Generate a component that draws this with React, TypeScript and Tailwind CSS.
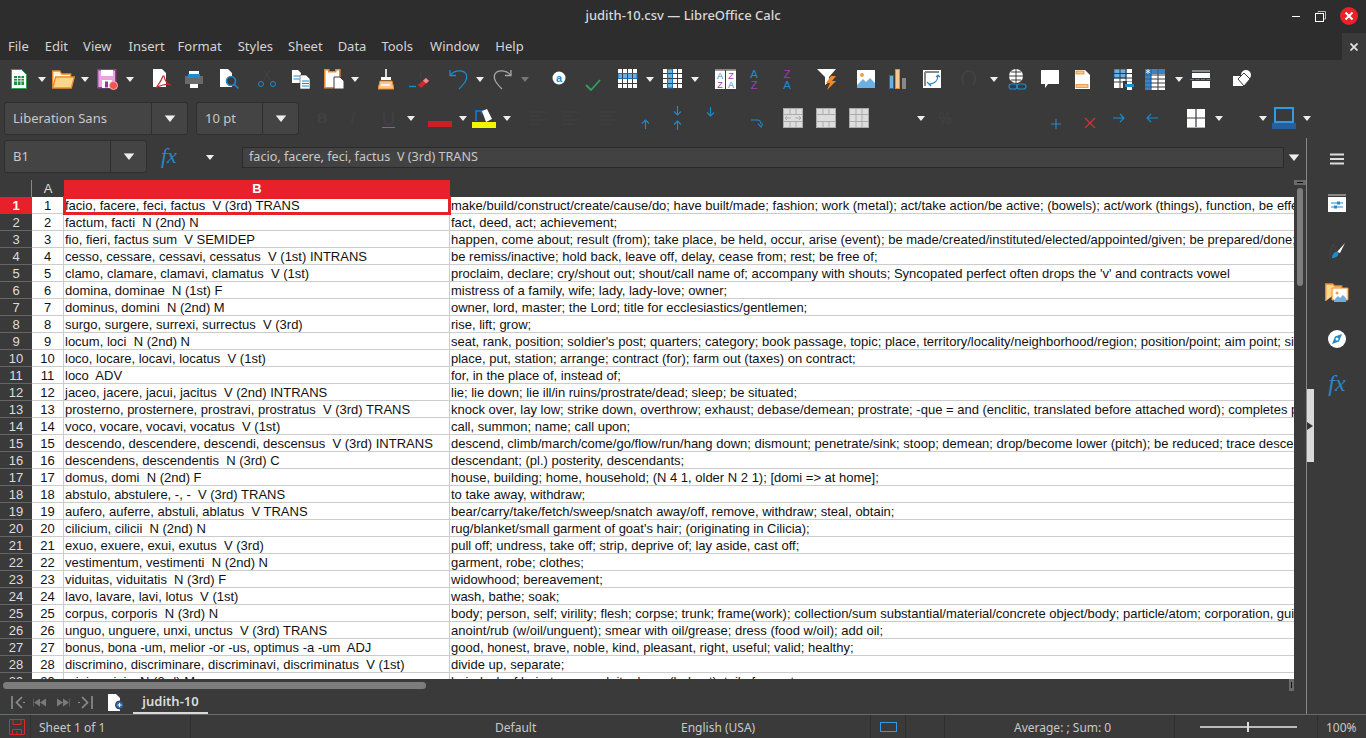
const SANS = "font-['Noto_Sans',sans-serif]";

const rows: [string, string][] = [
  ["facio, facere, feci, factus  V (3rd) TRANS", "make/build/construct/create/cause/do; have built/made; fashion; work (metal); act/take action/be active; (bowels); act/work (things), function, be effective; bring about"],
  ["factum, facti  N (2nd) N", "fact, deed, act; achievement;"],
  ["fio, fieri, factus sum  V SEMIDEP", "happen, come about; result (from); take place, be held, occur, arise (event); be made/created/instituted/elected/appointed/given; be prepared/done; be"],
  ["cesso, cessare, cessavi, cessatus  V (1st) INTRANS", "be remiss/inactive; hold back, leave off, delay, cease from; rest; be free of;"],
  ["clamo, clamare, clamavi, clamatus  V (1st)", "proclaim, declare; cry/shout out; shout/call name of; accompany with shouts; Syncopated perfect often drops the 'v' and contracts vowel"],
  ["domina, dominae  N (1st) F", "mistress of a family, wife; lady, lady-love; owner;"],
  ["dominus, domini  N (2nd) M", "owner, lord, master; the Lord; title for ecclesiastics/gentlemen;"],
  ["surgo, surgere, surrexi, surrectus  V (3rd)", "rise, lift; grow;"],
  ["locum, loci  N (2nd) N", "seat, rank, position; soldier's post; quarters; category; book passage, topic; place, territory/locality/neighborhood/region; position/point; aim point; situation"],
  ["loco, locare, locavi, locatus  V (1st)", "place, put, station; arrange; contract (for); farm out (taxes) on contract;"],
  ["loco  ADV", "for, in the place of, instead of;"],
  ["jaceo, jacere, jacui, jacitus  V (2nd) INTRANS", "lie; lie down; lie ill/in ruins/prostrate/dead; sleep; be situated;"],
  ["prosterno, prosternere, prostravi, prostratus  V (3rd) TRANS", "knock over, lay low; strike down, overthrow; exhaust; debase/demean; prostrate; -que = and (enclitic, translated before attached word); completes phrase"],
  ["voco, vocare, vocavi, vocatus  V (1st)", "call, summon; name; call upon;"],
  ["descendo, descendere, descendi, descensus  V (3rd) INTRANS", "descend, climb/march/come/go/flow/run/hang down; dismount; penetrate/sink; stoop; demean; drop/become lower (pitch); be reduced; trace descent from"],
  ["descendens, descendentis  N (3rd) C", "descendant; (pl.) posterity, descendants;"],
  ["domus, domi  N (2nd) F", "house, building; home, household; (N 4 1, older N 2 1); [domi => at home];"],
  ["abstulo, abstulere, -, -  V (3rd) TRANS", "to take away, withdraw;"],
  ["aufero, auferre, abstuli, ablatus  V TRANS", "bear/carry/take/fetch/sweep/snatch away/off, remove, withdraw; steal, obtain;"],
  ["cilicium, cilicii  N (2nd) N", "rug/blanket/small garment of goat's hair; (originating in Cilicia);"],
  ["exuo, exuere, exui, exutus  V (3rd)", "pull off; undress, take off; strip, deprive of; lay aside, cast off;"],
  ["vestimentum, vestimenti  N (2nd) N", "garment, robe; clothes;"],
  ["viduitas, viduitatis  N (3rd) F", "widowhood; bereavement;"],
  ["lavo, lavare, lavi, lotus  V (1st)", "wash, bathe; soak;"],
  ["corpus, corporis  N (3rd) N", "body; person, self; virility; flesh; corpse; trunk; frame(work); collection/sum substantial/material/concrete object/body; particle/atom; corporation, guild; group"],
  ["unguo, unguere, unxi, unctus  V (3rd) TRANS", "anoint/rub (w/oil/unguent); smear with oil/grease; dress (food w/oil); add oil;"],
  ["bonus, bona -um, melior -or -us, optimus -a -um  ADJ", "good, honest, brave, noble, kind, pleasant, right, useful; valid; healthy;"],
  ["discrimino, discriminare, discriminavi, discriminatus  V (1st)", "divide up, separate;"],
  ["crinis, crinis  N (3rd) M", "hair; lock of hair; tresses; plait; plume (helmet); tail of comet;"],
];

const BLUE = "#1e8bcd";
const DIM = "#444444";

function Drop({ className = "", dim = false }: { className?: string; dim?: boolean }) {
  return (
    <svg width="8" height="5" viewBox="0 0 8 5" className={`shrink-0 ${className}`}>
      <path d="M0 0h8L4 5z" fill={dim ? "#777" : "#eee"} />
    </svg>
  );
}

function Ico({ w, h, className = "", children }: { w: number; h: number; className?: string; children: React.ReactNode }) {
  return (
    <svg width={w} height={h} viewBox={`0 0 ${w} ${h}`} className={`shrink-0 ${className}`}>
      {children}
    </svg>
  );
}

function GridIcon({ cols, className }: { cols: boolean; className: string }) {
  const cells = [];
  for (let r = 0; r < 4; r++)
    for (let c = 0; c < 4; c++) {
      const on = cols ? c === 1 : r === 1;
      cells.push(<rect key={`${r}-${c}`} x={c * 5} y={r * 5} width="4" height="4" fill={on ? "#6bb0e0" : "#fff"} />);
    }
  return (
    <Ico w={20} h={20} className={className}>
      {cells}
      {cols ? <rect x="4.500" y="0" width="5" height="19" fill="none" stroke="#1a6cb5" /> : <rect x="0" y="4.500" width="19" height="5" fill="none" stroke="#1a6cb5" />}
    </Ico>
  );
}

function AZ({ top, bottom, topCol, botCol, className }: { top: string; bottom: string; topCol: string; botCol: string; className: string }) {
  return (
    <Ico w={10} h={22} className={className}>
      <text x="5" y="10" textAnchor="middle" fontSize="11.500" fontFamily="Liberation Sans" fill={topCol}>{top}</text>
      <text x="5" y="20.500" textAnchor="middle" fontSize="11.500" fontFamily="Liberation Sans" fill={botCol}>{bottom}</text>
    </Ico>
  );
}

function Toolbar1() {
  return (
    <div className="flex h-[38px] items-center bg-[#3a3a3a]">
      <Ico w={16} h={20} className="ml-[11px]">
        <path d="M.5.5h10l5 5v14H.5z" fill="#fff" stroke="#2f9e4f" />
        <path d="M3 7h10v9H3z" fill="#1e9146" />
        <path d="M3 9.500h10M3 12h10M6.500 7v9M10 7v9" stroke="#fff" strokeWidth=".8" />
      </Ico>
      <Drop className="ml-[11px]" />
      <Ico w={23} h={19} className="ml-[6px]">
        <path d="M.7 18V1h7l2 3h9v3" fill="#fff3d8" stroke="#ee8a2c" strokeWidth="1.300" />
        <path d="M.7 18l3-11h18.600l-3 11z" fill="#fad58c" stroke="#ee8a2c" strokeWidth="1.300" />
      </Ico>
      <Drop className="ml-[6px]" />
      <Ico w={21} h={21} className="ml-[8px]">
        <path d="M.7.7h18v18H.7z" fill="#e8a3e0" stroke="#8e3a9e" strokeWidth="1.400" />
        <rect x="4" y="1" width="12" height="6" fill="#fff" />
        <rect x="5" y="11" width="10" height="8" fill="#fff" />
        <rect x="8" y="12.500" width="3" height="6" fill="#8e3a9e" />
        <circle cx="16.500" cy="16.500" r="4" fill="#f85050" stroke="#f4b0b0" />
      </Ico>
      <Drop className="ml-[8px]" />
      <Ico w={19} h={20} className="ml-[19px]">
        <path d="M0 0h9l4 4v14H0z" fill="#fff" />
        <path d="M10 7c-2 6-5 9-7 12 3-2 10-5 15-3-3-.5-6-4-7-9z" fill="none" stroke="#c02a2a" strokeWidth="1.200" />
      </Ico>
      <Ico w={18} h={17} className="ml-[13px]">
        <rect x="4" y="0" width="10" height="6" fill="#fff" />
        <rect x="0" y="5" width="18" height="8" fill="#6a6a6a" />
        <rect x="3" y="3" width="12" height="4" fill="#1e8bcd" />
        <rect x="5" y="13" width="8" height="4" fill="#fff" />
      </Ico>
      <Ico w={19} h={20} className="ml-[17px]">
        <path d="M0 0h8l4 4v14H0z" fill="#fff" />
        <circle cx="11" cy="12" r="4.500" fill="#3a3a3a" stroke="#1e8bcd" strokeWidth="1.600" />
        <path d="M14 15l4.500 4.500" stroke="#1e8bcd" strokeWidth="1.400" />
      </Ico>
      <Ico w={18} h={20} className="ml-[19px]">
        <path d="M5 12L12 1M13 12L6 1" stroke={DIM} fill="none" />
        <circle cx="3" cy="15" r="2.500" fill="none" stroke={BLUE} />
        <circle cx="15" cy="15" r="2.500" fill="none" stroke={BLUE} />
      </Ico>
      <Ico w={19} h={19} className="ml-[16px]">
        <path d="M0 0h6l3 3v10H0z" fill="#fff" />
        <path d="M1.500 6h6M1.500 9h6" stroke={BLUE} />
        <path d="M8 5h6l4 4v10H8z" fill="#fff" stroke="#3a3a3a" strokeWidth=".6" />
        <path d="M10 11h7M10 13.500h7M10 16h7" stroke={BLUE} />
      </Ico>
      <Ico w={21} h={20} className="ml-[13px]">
        <path d="M.8.8h4v2h7v-2h4v18H.8z" fill="#fff" stroke="#ee8a2c" strokeWidth="1.500" />
        <path d="M10 8h6l4 4v8H10z" fill="#fff" stroke="#3a3a3a" />
      </Ico>
      <Drop className="ml-[6px]" />
      <Ico w={16} h={21} className="ml-[19px]">
        <rect x="7" y="0" width="2" height="9" fill="#d8d8d8" />
        <rect x="3" y="8" width="10" height="3" fill="#fff" />
        <path d="M2 12h12l2 8H0z" fill="#f6c78e" stroke="#e98a2c" />
        <path d="M3 16h9" stroke="#fff" strokeWidth="1.500" />
      </Ico>
      <Ico w={20} h={20} className="ml-[15px]">
        <path d="M0 17.500h7" stroke={BLUE} strokeWidth="1.400" />
        <path d="M9 16l8-7 3 3-8 7z" fill="#d9262c" />
        <path d="M14 11.500l3-2.500 3 3-3 2.500z" fill="#ef8a8a" />
        <path d="M12 3l-1 6" stroke={DIM} />
      </Ico>
      <Ico w={19} h={21} className="ml-[20px]">
        <path d="M1.500 6C5 1.500 14 0 17 5c2.500 5-2 10-7 15" fill="none" stroke={BLUE} strokeWidth="1.300" />
        <path d="M1 1v5.500h6" fill="none" stroke={BLUE} strokeWidth="1.300" />
      </Ico>
      <Drop className="ml-[8px]" />
      <Ico w={19} h={21} className="ml-[9px]">
        <path d="M18 1v5.500h-6" fill="none" stroke="#a8a8a8" strokeWidth="1.300" />
        <path d="M17.500 6C14 1.500 5 0 2 5c-2.500 5 2 10 7 15" fill="none" stroke="#a8a8a8" strokeWidth="1.300" />
      </Ico>
      <Drop dim className="ml-[9px]" />
      <Ico w={14} h={14} className="ml-[23px] mb-[2px]">
        <circle cx="7" cy="7" r="6.500" fill="#fff" />
        <text x="7" y="10.800" textAnchor="middle" fontSize="11" fontWeight="700" fontFamily="Liberation Sans" fill={BLUE}>a</text>
      </Ico>
      <Ico w={16} h={12} className="ml-[19px] mt-[11px]">
        <path d="M1 6l5 5 9-10" fill="none" stroke="#2ca35a" strokeWidth="1.800" />
      </Ico>
      <GridIcon cols={false} className="ml-[17px]" />
      <Drop className="ml-[8px]" />
      <GridIcon cols className="ml-[9px]" />
      <Drop className="ml-[8px]" />
      <Ico w={21} h={20} className="ml-[16px]">
        <rect y="0" width="21" height="1" fill="#888" />
        <rect y="1.500" width="10" height="18.500" fill="#fff" />
        <rect x="11" y="1.500" width="10" height="18.500" fill="#fff" />
        <text x="5" y="10" textAnchor="middle" fontSize="9" fontFamily="Liberation Sans" fill={BLUE}>A</text>
        <text x="5" y="19" textAnchor="middle" fontSize="9" fontFamily="Liberation Sans" fill="#a33ab0">Z</text>
        <text x="16" y="10" textAnchor="middle" fontSize="9" fontFamily="Liberation Sans" fill="#a33ab0">Z</text>
        <text x="16" y="19" textAnchor="middle" fontSize="9" fontFamily="Liberation Sans" fill={BLUE}>A</text>
      </Ico>
      <AZ top="A" bottom="Z" topCol={BLUE} botCol="#a33ab0" className="ml-[13px]" />
      <AZ top="Z" bottom="A" topCol="#a33ab0" botCol={BLUE} className="ml-[23px]" />
      <Ico w={20} h={21} className="ml-[25px]">
        <path d="M0 0h19l-7 8v5l-4 3V8z" fill="#fff" />
        <path d="M14 7h5l-4 5h4l-9 9 3-7H9z" fill="#f08a2c" />
      </Ico>
      <Ico w={18} h={18} className="ml-[20px]">
        <rect width="18" height="18" fill="#fff" />
        <circle cx="5" cy="5" r="2" fill="#f0a040" />
        <path d="M0 15l6-6 3 3 4-4 5 5v5H0z" fill="#6bb0e0" />
      </Ico>
      <Ico w={17} h={20} className="ml-[14px]">
        <rect x=".5" y="6.500" width="4" height="13" fill="#6bb0e0" stroke="#1a6cb5" />
        <rect x="6.500" y=".5" width="4" height="19" fill="#f6c78e" stroke="#ee8a2c" />
        <rect x="13" y="9" width="4" height="11" fill="#888" />
      </Ico>
      <Ico w={18} h={18} className="ml-[17px]">
        <rect width="18" height="18" fill="#fff" />
        <path d="M2 2h14M2 2v14" stroke="#888" strokeWidth="2" />
        <path d="M6 14C12 14 15 10 15 5M4 12l2 2 2 2M13 7l2-2 2 2" fill="none" stroke={BLUE} strokeWidth="1.200" />
      </Ico>
      <Ico w={15} h={18} className="ml-[20px]">
        <path d="M3 15C-1 8 3 1 8 1s9 7 4 14" fill="none" stroke={DIM} strokeWidth="1.500" />
      </Ico>
      <Drop className="ml-[14px]" />
      <Ico w={20} h={21} className="ml-[10px]">
        <circle cx="8" cy="7" r="7" fill="#fff" />
        <path d="M1 7h14M8 0v14M3 3h10M3 11h10" stroke="#3a3a3a" />
        <rect x="1" y="15" width="8" height="5" rx="2.500" fill="none" stroke={BLUE} strokeWidth="1.200" />
        <rect x="9" y="15" width="9" height="5" rx="2.500" fill="none" stroke={BLUE} strokeWidth="1.200" />
      </Ico>
      <Ico w={18} h={18} className="ml-[13px]">
        <path d="M0 0h18v14H7l-3 4v-4H0z" fill="#fff" />
      </Ico>
      <Ico w={15} h={19} className="ml-[16px]">
        <path d="M0 0h10l5 5v14H0z" fill="#fff" />
        <rect x="1" y="1" width="8" height="3" fill="#f6c78e" stroke="#ee8a2c" strokeWidth=".8" />
        <rect x="1" y="14.500" width="12" height="3" fill="#f6c78e" stroke="#ee8a2c" strokeWidth=".8" />
      </Ico>
      <Ico w={20} h={21} className="ml-[24px]">
        <rect width="18" height="19" fill="#fff" />
        <rect width="12" height="9" fill="#6bb0e0" stroke="#1a6cb5" />
        <path d="M0 4.500h18M0 9h18M0 13h18M6 0v19M12 0v19" stroke="#3a3a3a" />
        <rect x="9" y="12" width="11" height="9" fill="#3a3a3a" />
        <rect x="13" y="12.500" width="5" height="3" fill="#fff" />
        <rect x="11" y="15" width="9" height="3" fill={BLUE} />
        <rect x="13" y="18" width="5" height="3" fill="#fff" />
      </Ico>
      <Ico w={20} h={21} className="ml-[11px]">
        <rect width="20" height="21" fill="#fff" />
        <path d="M0 6h20M0 10h20M0 14h20M0 18h20M6 0v21M13 0v21" stroke="#3a3a3a" />
        <rect width="6" height="21" fill="#1a6cb5" opacity=".85" />
        <rect width="20" height="5" fill="#1a6cb5" opacity=".85" />
        <path d="M3 0v5M.7 1.200l4.600 2.600M5.300 1.200L.7 3.800" stroke="#fff" strokeWidth=".8" />
      </Ico>
      <Drop className="ml-[10px]" />
      <Ico w={22} h={18} className="ml-[7px]">
        <rect x="2" y="0" width="18" height="2" fill="#888" />
        <rect x="2" y="3" width="18" height="5" fill="#fff" />
        <path d="M0 9.500h22" stroke={BLUE} strokeDasharray="4 1.500" />
        <rect x="2" y="11" width="18" height="7" fill="#fff" />
      </Ico>
      <Ico w={19} h={18} className="ml-[21px]">
        <rect x="0" y="6" width="11" height="10" fill="#fff" />
        <circle cx="13" cy="5" r="5" fill="#fff" />
        <path d="M11 3l6 6-6 7-6-7z" fill="#fff" stroke="#3a3a3a" />
      </Ico>
    </div>
  );
}

function Combo({ text, w, btn }: { text: string; w: string; btn: string }) {
  return (
    <div className={`flex h-[33px] items-center rounded-[3px] border border-[#2e2e2e] bg-[#444444] ${w}`}>
      <span className="flex-1 truncate pl-[8px] pt-[1px] text-[13px] text-[#c8c8c8]">{text}</span>
      <div className={`flex h-full items-center justify-center border-l border-[#2e2e2e] ${btn}`}>
        <Drop className="scale-[1.35]" />
      </div>
    </div>
  );
}

function ArrowV({ up, className }: { up: boolean; className: string }) {
  return (
    <Ico w={9} h={10} className={className}>
      <path d={up ? "M4.500 10V1M1 4.500L4.500 1 8 4.500" : "M4.500 0v9M1 5.500L4.500 9 8 5.500"} fill="none" stroke={BLUE} strokeWidth="1.100" />
    </Ico>
  );
}

function DimLines({ className }: { className: string }) {
  return (
    <Ico w={16} h={14} className={className}>
      <path d="M0 1h16M0 5h11M0 9h16M0 13h11" stroke="#414141" />
    </Ico>
  );
}

function MergeIcon({ className, kind }: { className: string; kind: number }) {
  return (
    <Ico w={20} h={20} className={className}>
      <rect x=".5" y=".5" width="19" height="19" fill="#dddddd" stroke="#ababab" />
      <path d="M0 6.500h20M0 13.500h20" stroke="#ababab" />
      {kind !== 2 && <path d="M7 0v6M13 0v6M7 14v6M13 14v6" stroke="#ababab" />}
      {kind === 0 && <path d="M2 10h6M12 10h6M2 10l2-2M2 10l2 2M18 10l-2-2M18 10l-2 2" stroke="#ababab" fill="none" />}
      {kind === 2 && <path d="M7 0v20M13 0v20" stroke="#ababab" />}
    </Ico>
  );
}

function Toolbar2() {
  return (
    <div className="flex h-[40px] items-center bg-[#3a3a3a]">
      <div className="ml-[4px]">
        <Combo text="Liberation Sans" w="w-[184px]" btn="w-[36px]" />
      </div>
      <div className="ml-[8px]">
        <Combo text="10 pt" w="w-[103px]" btn="w-[36px]" />
      </div>
      <span className="ml-[18px] w-[12px] font-['Liberation_Sans',sans-serif] text-[15px] font-bold text-[#414141]">B</span>
      <span className="ml-[21px] w-[6px] font-['Liberation_Serif',serif] text-[15px] italic text-[#414141]">I</span>
      <Ico w={13} h={16} className="ml-[26px] mt-[3px]">
        <path d="M2 0v8a4 4 0 009 0V0" fill="none" stroke={DIM} strokeWidth="1.300" />
        <path d="M0 15.500h13" stroke={BLUE} />
      </Ico>
      <Drop className="ml-[12px]" />
      <div className="ml-[13px] mt-[12px] h-[6px] w-[24px] bg-[#c91f25]" />
      <Drop className="ml-[7px]" />
      <div className="ml-[5px] flex w-[24px] flex-col">
        <Ico w={24} h={13}>
          <path d="M4 12V2h6v3" fill="none" stroke="#1a6cb5" strokeWidth="2" />
          <path d="M10 2l5-2 5 10-6 3z" fill="#fff" />
        </Ico>
        <div className="h-[6px] bg-[#f5f500]" />
      </div>
      <Drop className="ml-[7px]" />
      <DimLines className="ml-[19px]" />
      <DimLines className="ml-[17px]" />
      <DimLines className="ml-[21px]" />
      <ArrowV up className="ml-[25px] mt-[11px]" />
      <div className="ml-[23px] flex flex-col gap-[4px]">
        <ArrowV up={false} className="" />
        <ArrowV up className="" />
      </div>
      <ArrowV up={false} className="ml-[24px] mb-[12px]" />
      <Ico w={12} h={10} className="ml-[36px] mt-[9px]">
        <path d="M0 2h6c2.500 0 4 1.500 4 4M7 5.500L10 9 12 5.500" fill="none" stroke={BLUE} strokeWidth="1.100" />
      </Ico>
      <MergeIcon kind={0} className="ml-[20px]" />
      <MergeIcon kind={1} className="ml-[13px]" />
      <MergeIcon kind={2} className="ml-[13px]" />
      <Drop className="ml-[48px]" />
      <span className="ml-[13px] w-[14px] text-[17px] text-[#414141]">%</span>
      <Ico w={12} h={12} className="ml-[98px] mt-[12px]">
        <path d="M6 1v10M1 6h10" stroke={BLUE} strokeWidth="1.100" />
      </Ico>
      <Ico w={12} h={12} className="ml-[22px] mt-[10px]">
        <path d="M1 1l10 10M11 1L1 11" stroke="#d8333a" strokeWidth="1.100" />
      </Ico>
      <Ico w={12} h={10} className="ml-[17px]">
        <path d="M0 5h11M7 1l4 4-4 4" fill="none" stroke={BLUE} strokeWidth="1.100" />
      </Ico>
      <Ico w={12} h={10} className="ml-[21px]">
        <path d="M12 5H1M5 1L1 5l4 4" fill="none" stroke={BLUE} strokeWidth="1.100" />
      </Ico>
      <Ico w={18} h={19} className="ml-[29px]">
        <rect width="18" height="18" fill="#fff" />
        <path d="M9 0v18M0 9h18" stroke="#3a3a3a" strokeWidth="1.200" />
        <path d="M0 18.500h18" stroke="#f6a24a" />
      </Ico>
      <Drop className="ml-[10px]" />
      <Drop className="ml-[36px]" />
      <div className="ml-[5px] flex w-[24px] flex-col">
        <div className="mx-auto h-[16px] w-[20px] border-2 border-[#2f9be6] bg-[#3a3a3a]" />
        <div className="h-[6px] bg-[#265f9e]" />
      </div>
      <Drop className="ml-[7px]" />
    </div>
  );
}

function FormulaBar() {
  return (
    <div className="flex h-[42px] items-start bg-[#3a3a3a]">
      <div className="ml-[4px] mt-[2px] flex h-[33px] w-[143px] items-center rounded-[3px] border border-[#2e2e2e] bg-[#444444]">
        <span className="flex-1 pl-[8px] text-[13px] text-[#c8c8c8]">B1</span>
        <div className="flex h-full w-[36px] items-center justify-center border-l border-[#2e2e2e]">
          <Drop className="scale-[1.35]" />
        </div>
      </div>
      <span className="ml-[14px] mt-[6px] w-[16px] font-['Liberation_Serif',serif] text-[22px] italic leading-[24px] text-[#2a86c7]">fx</span>
      <Drop className="ml-[29px] mt-[17px]" />
      <div className="ml-[28px] mt-[9px] flex h-[21px] w-[1042px] items-center whitespace-pre border border-[#2a2a2a] bg-[#424242] pl-[6px] text-[12.6px] text-[#c8c8c8]">
        facio, facere, feci, factus  V (3rd) TRANS
      </div>
      <Drop className="ml-[6px] mt-[17px] scale-[1.35]" />
    </div>
  );
}

function Grid() {
  return (
    <div className="relative flex h-[499px] overflow-hidden">
      <div className="flex min-w-0 flex-1 flex-col overflow-hidden font-['Liberation_Sans',sans-serif] text-[13px] text-[#111]">
        <div className="flex h-[17px] shrink-0 leading-[17px]">
          <div className="w-[32px] border-r border-[#888] bg-[#3a3a3a]" />
          <div className="w-[32px] bg-[#3a3a3a] text-center text-[#ddd]">A</div>
          <div className="w-[386px] bg-[#e8202a] text-center font-bold text-white">B</div>
          <div className="flex-1 bg-[#3a3a3a]" />
        </div>
        {rows.map(([b, c], i) => (
          <div key={i} className="flex h-[17px] shrink-0 leading-[16px]">
            <div className={`w-[32px] shrink-0 border-b pt-[1px] text-center ${i === 0 ? "border-[#e8202a] bg-[#e8202a] font-bold text-white" : "border-[#666] bg-[#3a3a3a] text-[#ddd]"}`}>
              {i + 1}
            </div>
            <div className="w-[32px] shrink-0 border-r border-b border-[#ccc] bg-white pt-[1px] text-center">{i + 1}</div>
            <div className={`relative w-[386px] shrink-0 overflow-hidden whitespace-pre border-r border-b border-[#ccc] bg-white pl-[1px] pt-[1px] ${i === 0 ? "z-10 overflow-visible outline-[3px] -outline-offset-2 outline-[#e8202a]" : ""}`}>
              {b}
            </div>
            <div className="min-w-0 flex-1 overflow-hidden whitespace-pre border-b border-[#ccc] bg-white pl-[1px] pt-[1px]">{c}</div>
          </div>
        ))}
      </div>
      <div className="relative w-[12px] shrink-0 bg-[#3a3a3a]">
        <div className="flex h-[5px] items-center justify-center bg-[#6a6a6a]">
          <div className="h-[1px] w-[6px] bg-[#111]" />
        </div>
        <div className="mx-auto mt-[3px] h-[98px] w-[6px] rounded-full bg-[#7d7d7d]" />
      </div>
    </div>
  );
}

function HScroll() {
  return (
    <div className="flex h-[12px] items-center bg-[#3a3a3a]">
      <div className="ml-[3px] h-[7px] w-[423px] rounded-full bg-[#7d7d7d]" />
      <div className="ml-auto mr-[12px] flex h-full w-[5px] items-center justify-center bg-[#6a6a6a]">
        <div className="h-[6px] w-[1px] bg-[#111]" />
      </div>
    </div>
  );
}

function TabBar() {
  return (
    <div className="flex h-[23px] items-center bg-[#3a3a3a]">
      <Ico w={14} h={13} className="ml-[11px]">
        <path d="M1 0v13M11 1L5.500 6.500 11 12" fill="none" stroke="#8f8f8f" strokeWidth="1.600" />
        <path d="M12 6.500h2" stroke="#8f8f8f" />
      </Ico>
      <Ico w={14} h={9} className="ml-[8px]">
        <path d="M0 .5v8" stroke="#7a7a7a" />
        <path d="M1 4.500l6-4v8zM7 4.500l6-4v8z" fill="#7a7a7a" />
      </Ico>
      <Ico w={14} h={9} className="ml-[9px]">
        <path d="M14 .5v8" stroke="#7a7a7a" />
        <path d="M13 4.500l-6-4v8zM7 4.500l-6-4v8z" fill="#7a7a7a" />
      </Ico>
      <Ico w={15} h={13} className="ml-[8px]">
        <path d="M14 0v13M4 1l5.500 5.500L4 12" fill="none" stroke="#8f8f8f" strokeWidth="1.600" />
        <path d="M0 6.500h2" stroke="#8f8f8f" />
      </Ico>
      <Ico w={16} h={17} className="ml-[15px]">
        <path d="M0 0h8l4 4v13H0z" fill="#fff" />
        <circle cx="11.500" cy="11" r="4" fill="#2d6db5" stroke="#3a3a3a" />
        <path d="M11.500 9v4M9.500 11h4" stroke="#fff" />
      </Ico>
      <div className="ml-[9px] flex h-full w-[75px] items-center justify-center border-b-2 border-[#d8d8d8] text-[13px] font-semibold text-[#dcdcdc]">
        judith-10
      </div>
    </div>
  );
}

function Sidebar() {
  return (
    <div className="relative flex w-[60px] shrink-0 flex-col items-center border-l border-[#888] bg-[#3a3a3a] pl-[1px]">
      <div className="absolute left-0 top-[251px] flex h-[73px] w-[7px] items-center bg-[#d9d9d9]">
        <svg width="6" height="8" viewBox="0 0 6 8">
          <path d="M0 0l6 4-6 4z" fill="#333" />
        </svg>
      </div>
      <Ico w={14} h={12} className="mt-[15px]">
        <path d="M0 1.500h14M0 6h14M0 10.500h14" stroke="#ddd" strokeWidth="2" />
      </Ico>
      <Ico w={18} h={18} className="mt-[29px]">
        <rect width="18" height="2" fill="#888" />
        <rect y="3" width="18" height="15" fill="#fff" />
        <path d="M3 9h12M3 13h12" stroke={BLUE} />
        <rect x="9" y="7.500" width="3" height="3" fill={BLUE} />
        <rect x="6" y="11.500" width="3" height="3" fill={BLUE} />
      </Ico>
      <Ico w={18} h={18} className="mt-[30px]">
        <path d="M9 10l8-9-5 10z" fill="#fff" />
        <path d="M4 16c0-4 3-7 6-6 1 2 0 5-2 5-1 1-3 1-4 1z" fill={BLUE} />
        <path d="M1 14L5 2l4 8" fill="none" stroke={DIM} />
      </Ico>
      <Ico w={24} h={19} className="mt-[23px]">
        <path d="M.7 18V1h7l2 2h7v3" fill="#fad58c" stroke="#ee8a2c" strokeWidth="1.300" />
        <path d="M7 5h16v12H7z" fill="#fff3d8" stroke="#ee8a2c" />
        <rect x="9" y="6.500" width="12" height="12" fill="#fff" />
        <circle cx="12" cy="10" r="1.500" fill="#f0a040" />
        <path d="M9 17l4-4 2 2 3-3 3 3v4H9z" fill="#6bb0e0" />
      </Ico>
      <Ico w={18} h={18} className="mt-[28px]">
        <circle cx="9" cy="9" r="9" fill="#fff" />
        <path d="M14 4L7 6.500 4 14l7-2.500z" fill={BLUE} />
        <circle cx="9" cy="9" r="1.500" fill="#fff" />
      </Ico>
      <span className="mt-[22px] font-['Liberation_Serif',serif] text-[24px] italic leading-[26px] text-[#2a86c7]">fx</span>
    </div>
  );
}

function StatusBar() {
  return (
    <div className="flex h-[24px] items-center border-t border-[#6a6a6a] bg-[#3a3a3a] text-[12px] text-[#c8c8c8]">
      <div className="flex h-full w-[31px] items-center border-r border-[#2f2f2f] pl-[9px]">
        <Ico w={16} h={16}>
          <path d="M.5.5h15v15H.5zM4 .5v5h8v-5M3.500 15.500v-5h9v5M8 12v3" fill="none" stroke="#d52b2b" />
        </Ico>
      </div>
      <div className="h-full w-[160px] border-r border-[#2f2f2f] pl-[8px] pt-[4px]">Sheet 1 of 1</div>
      <div className="h-full w-[410px] pl-[304px] pt-[4px]">Default</div>
      <div className="h-full w-[270px] border-r border-[#2f2f2f] pl-[80px] pt-[4px]">English (USA)</div>
      <div className="flex h-full w-[35px] items-center border-r border-[#2f2f2f] pl-[9px]">
        <div className="h-[10px] w-[17px] border border-[#2f9be6]" />
      </div>
      <div className="h-full w-[39px] border-r border-[#2f2f2f]" />
      <div className="h-full w-[230px] border-r border-[#2f2f2f] pl-[69px] pt-[4px]">Average: ; Sum: 0</div>
      <div className="flex h-full w-[143px] items-center border-r border-[#2f2f2f] pl-[25px]">
        <div className="relative h-[2px] w-[97px] bg-[#bbb]">
          <div className="absolute left-[47px] top-[-4px] h-[10px] w-[2px] bg-[#ddd]" />
        </div>
      </div>
      <div className="h-full pl-[8px] pt-[4px]">100%</div>
    </div>
  );
}

export default function App() {
  return (
    <div className={`flex h-[738px] w-[1366px] flex-col overflow-hidden bg-[#3a3a3a] ${SANS}`}>
      <div className="relative flex h-[32px] shrink-0 items-center justify-center bg-[#2d2d2d] text-[13px] font-medium text-[#d8d8d8]">
        judith-10.csv — LibreOffice Calc
        <div className="absolute right-[8px] top-[7px] flex items-center">
          <div className="mr-[15px] h-[1px] w-[8px] bg-white" />
          <Ico w={11} h={11} className="mr-[14px]">
            <path d="M3 1.500V.5h7.500V8H9" fill="none" stroke="#bbb" />
            <rect x=".5" y="2.500" width="8" height="8" fill="none" stroke="#fff" />
          </Ico>
          <Ico w={18} h={18}>
            <circle cx="9" cy="9" r="9" fill="#e9212b" />
            <path d="M5.500 5.500l7 7M12.500 5.500l-7 7" stroke="#fff" strokeWidth="2" />
          </Ico>
        </div>
      </div>
      <div className="flex h-[28px] shrink-0 items-center bg-[#2d2d2d] pl-[8px] pt-[1px] text-[13px] text-[#d4d4d4]">
        <span>File</span>
        <span className="ml-[16px]">Edit</span>
        <span className="ml-[15px]">View</span>
        <span className="ml-[17px]">Insert</span>
        <span className="ml-[13px]">Format</span>
        <span className="ml-[16px]">Styles</span>
        <span className="ml-[15px]">Sheet</span>
        <span className="ml-[15px]">Data</span>
        <span className="ml-[15px]">Tools</span>
        <span className="ml-[17px]">Window</span>
        <span className="ml-[16px]">Help</span>
        <div className="ml-auto flex h-full w-[24px] items-center justify-center bg-[#3a3a3a]">
          <svg width="8" height="8" viewBox="0 0 8 8">
            <path d="M.5.5l7 7M7.500.5l-7 7" stroke="#e0e0e0" strokeWidth="1.800" />
          </svg>
        </div>
      </div>
      <Toolbar1 />
      <Toolbar2 />
      <div className="flex min-h-0 flex-1">
        <div className="flex min-w-0 flex-1 flex-col">
          <FormulaBar />
          <Grid />
          <HScroll />
          <TabBar />
        </div>
        <Sidebar />
      </div>
      <StatusBar />
    </div>
  );
}
